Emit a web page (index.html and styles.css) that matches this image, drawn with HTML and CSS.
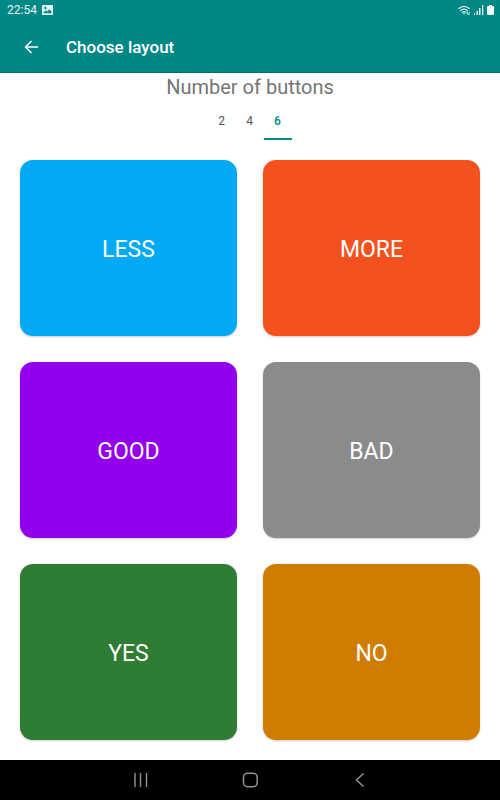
FILE: index.html
```html
<!DOCTYPE html>
<html lang="en">
<head>
<meta charset="utf-8">
<meta name="viewport" content="width=device-width, initial-scale=1">
<title>Choose layout</title>
<link rel="stylesheet" href="styles.css">
</head>
<body>
<header class="top">
  <div class="status">
    <span class="clock">22:54</span>
    <svg class="photo" viewBox="0 0 11 10" width="11" height="10" aria-hidden="true">
      <path fill="#e8f8f6" fill-rule="evenodd" d="M1 0h9q1 0 1 1v8q0 1-1 1H1q-1 0-1-1V1q0-1 1-1zM1.500 8.300h8V6.500L7.500 4.300 5.300 6.500 4 5.300 1.500 7.300zM2.800 1.500v1h-1v1h1v1h1v-1h1v-1h-1v-1z"/>
    </svg>
    <div class="signals">
      <svg viewBox="0 0 13 11" width="13" height="11" fill="none" stroke="#dff5f3" stroke-width="1.200" aria-hidden="true">
        <path d="M.5 3.800Q6 -1 11.500 3.800M2.300 5.700Q6 2.500 9.700 5.700M4 7.500Q6 5.800 8 7.500"/>
        <path d="M4.800 8.300L6 9.800 7.200 8.300z" fill="#dff5f3" stroke="none"/>
        <path d="M9.200 6.500v3M11 7v3" stroke-width="1"/>
      </svg>
      <svg viewBox="0 0 10 10" width="10" height="10" fill="#dff5f3" aria-hidden="true">
        <path d="M0 8h1v2H0zM2.500 6H4v4H2.500zM5 3h1.500v7H5zM8 0h1.300v10H8z"/>
      </svg>
      <svg viewBox="0 0 7 10" width="7" height="10" fill="#f0fbfa" aria-hidden="true">
        <path d="M2 0h3v1h1q1 0 1 1v7q0 1-1 1H1q-1 0-1-1V2q0-1 1-1h1z"/>
      </svg>
    </div>
  </div>
  <div class="bar">
    <button class="back" type="button" aria-label="Back">
      <svg viewBox="0 0 14 14" width="14" height="14" fill="none" stroke="#fff" stroke-width="1.500" aria-hidden="true">
        <path d="M14 7H1.500M7.500 1L1.500 7l6 6"/>
      </svg>
    </button>
    <h1 class="title">Choose layout</h1>
  </div>
</header>
<main class="content">
  <h2 class="heading">Number of buttons</h2>
  <div class="tabs" role="tablist" aria-label="Number of buttons">
    <button class="tab" type="button" role="tab" aria-selected="false">2</button>
    <button class="tab" type="button" role="tab" aria-selected="false">4</button>
    <button class="tab selected" type="button" role="tab" aria-selected="true">6</button>
  </div>
  <div class="grid">
    <button class="card less" type="button">LESS</button>
    <button class="card more" type="button">MORE</button>
    <button class="card good" type="button">GOOD</button>
    <button class="card bad" type="button">BAD</button>
    <button class="card yes" type="button">YES</button>
    <button class="card no" type="button">NO</button>
  </div>
</main>
<nav class="system">
  <button class="key" type="button" aria-label="Recent apps">
    <svg viewBox="0 0 16 16" width="16" height="16" fill="none" stroke="#929292" stroke-width="1.400" aria-hidden="true">
      <path d="M3 1v14M8.500 1v14M14.500 1v14"/>
    </svg>
  </button>
  <button class="key" type="button" aria-label="Home">
    <svg viewBox="0 0 16 16" width="16" height="16" fill="none" stroke="#929292" stroke-width="1.500" aria-hidden="true">
      <rect x="1.500" y="1.300" width="13.700" height="13.400" rx="4"/>
    </svg>
  </button>
  <button class="key" type="button" aria-label="Back">
    <svg viewBox="0 0 16 16" width="16" height="16" fill="none" stroke="#929292" stroke-width="1.500" aria-hidden="true">
      <path d="M11.500 1.500L4.500 8l7 6.500"/>
    </svg>
  </button>
</nav>
</body>
</html>
```
FILE: styles.css
```css
* {
  box-sizing: border-box;
}

body {
  margin: 0;
  min-height: 100vh;
  display: flex;
  flex-direction: column;
  background: #fff;
  font-family: Roboto, "Liberation Sans", sans-serif;
}

button {
  margin: 0;
  padding: 0;
  border: 0;
  background: none;
  font-family: inherit;
  cursor: pointer;
}

svg {
  display: block;
}

.top {
  background: #018786;
  color: #fff;
  border-bottom: 1px solid #01706f;
}

.status {
  display: flex;
  align-items: center;
  height: 20px;
  padding: 0 6px 0 7px;
  gap: 5px;
}

.clock {
  font-size: 12px;
  line-height: 20px;
  color: #e8f8f6;
}

.signals {
  display: flex;
  align-items: center;
  gap: 3px;
  margin-left: auto;
}

.bar {
  display: flex;
  align-items: center;
  height: 52px;
  padding: 2px 24px 0;
  gap: 28px;
}

.title {
  margin: 0;
  font-size: 17px;
  line-height: 24px;
  font-weight: 500;
}

.content {
  flex: 1;
  display: flex;
  flex-direction: column;
}

.heading {
  margin: 0;
  padding-top: 2px;
  font-size: 20px;
  line-height: 24px;
  font-weight: 400;
  text-align: center;
  color: #757575;
}

.tabs {
  display: flex;
  justify-content: center;
  margin-left: -1px;
}

.tab {
  width: 28px;
  height: 41px;
  padding-top: 4px;
  border-bottom: 2px solid transparent;
  font-size: 12px;
  font-weight: 400;
  color: #555;
}

.selected {
  font-weight: 500;
  color: #018786;
  border-bottom-color: #018786;
}

.grid {
  flex: 1;
  display: grid;
  grid-template-columns: 1fr 1fr;
  grid-auto-rows: 1fr;
  gap: 26px;
  padding: 20px;
}

.card {
  min-height: 80px;
  padding-top: 2px;
  border-radius: 13px;
  box-shadow: 0 1px 2px rgba(0, 0, 0, 0.2);
  font-size: 23px;
  color: #fff;
}

.less {
  background: #03a9f4;
}

.more {
  background: #f4511e;
}

.good {
  background: #9200ee;
}

.bad {
  background: #8b8b8b;
}

.yes {
  background: #2e7d32;
}

.no {
  background: #d07c00;
}

.system {
  display: grid;
  grid-template-columns: repeat(3, 22%);
  place-items: center;
  justify-content: center;
  height: 40px;
  background: #000;
}

.key {
  width: 16px;
  height: 16px;
}
```
